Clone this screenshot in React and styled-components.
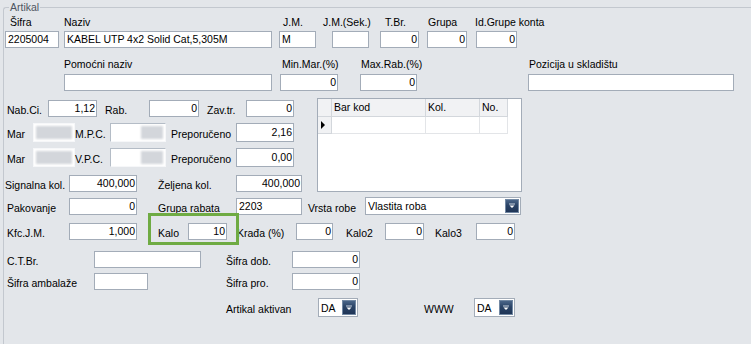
import styled, { createGlobalStyle } from "styled-components";

const Global = createGlobalStyle`
  html, body {
    margin: 0;
    padding: 0;
    background: #e3e6ea;
    overflow: hidden;
  }
  body {
    font-family: "Liberation Sans", Arial, sans-serif;
    font-size: 10.5px;
    color: #000;
  }
`;

// the group box continues past the window edge, so only top/left borders show
const GroupBox = styled.fieldset`
  margin: 1px 0 0 3px;
  padding: 0;
  width: 748px;
  height: 343px;
  border: 1px solid #c3c8cf;
  border-right: none;
  border-bottom: none;
  border-radius: 3px 0 0 0;
  min-width: 0;
  box-sizing: border-box;
`;

const Legend = styled.legend`
  margin-left: 5px;
  padding: 0 1px;
  line-height: 13px;
  color: #4e5560;
`;

const Row = styled.div`
  display: flex;
  align-items: center;
  height: ${(p) => (p.$h ? `${p.$h}px` : "auto")};
  margin-top: ${(p) => p.$mt || 0}px;
  position: relative;
`;

const Label = styled.span`
  flex: none;
  width: ${(p) => (p.$w ? `${p.$w}px` : "auto")};
  margin-left: ${(p) => p.$ml || 0}px;
  line-height: 13px;
  white-space: nowrap;
  align-self: ${(p) => (p.$head ? "auto" : "flex-end")};
  margin-bottom: ${(p) => p.$mb || 0}px;
`;

const Field = styled.div`
  flex: none;
  box-sizing: border-box;
  width: ${(p) => p.$w}px;
  height: ${(p) => p.$h || 17}px;
  margin-left: ${(p) => p.$ml || 0}px;
  background: #fff;
  border: 1px solid #a3acb8;
  padding: 0 ${(p) => (p.$left ? 2 : 1)}px;
  text-align: ${(p) => (p.$left ? "left" : "right")};
  line-height: ${(p) => (p.$h || 17) - 2}px;
  white-space: nowrap;
  overflow: hidden;
`;

const Hidden = styled.div`
  flex: none;
  box-sizing: border-box;
  width: ${(p) => p.$w}px;
  height: 19px;
  border: 1px solid ${(p) => (p.$solid ? "#f6f7f9" : "#b4bcc6")};
  border-right-color: #f6f7f9;
  border-bottom-color: #f6f7f9;
  background: #fff;
  display: flex;
  justify-content: flex-end;
  padding: 2px;
  overflow: hidden;
`;

const Smudge = styled.div`
  width: ${(p) => (p.$full ? "100%" : "22px")};
  height: 100%;
  background: #d3d6db;
  filter: blur(0.8px);
`;

const Select = styled.div`
  flex: none;
  box-sizing: border-box;
  display: flex;
  align-items: center;
  width: ${(p) => p.$w}px;
  height: ${(p) => p.$h || 18}px;
  margin-left: ${(p) => p.$ml || 0}px;
  background: #fff;
  border: 1px solid #a3acb8;
  padding: 1px 1px 1px 2px;
`;

const SelectText = styled.span`
  flex: 1;
  white-space: nowrap;
  overflow: hidden;
`;

const DropBtn = styled.span`
  flex: none;
  box-sizing: border-box;
  width: 14px;
  height: 100%;
  border: 1px solid #7288a3;
  background: linear-gradient(#4a6588, #2a4366 45%, #1f3557);
  display: flex;
  align-items: center;
  justify-content: center;
`;

const Mid = styled.div`
  display: flex;
  align-items: flex-start;
  margin-top: 7px;
`;

const LeftCol = styled.div`
  width: 298px;
  padding-top: 1px;
  flex: none;
`;

const Grid = styled.div`
  flex: none;
  box-sizing: border-box;
  margin-left: 15px;
  width: 205px;
  height: 94px;
  background: #fff;
  border: 1px solid #a3acb8;
`;

const GridRow = styled.div`
  display: flex;
  height: ${(p) => p.$h}px;
`;

const Cell = styled.div`
  flex: none;
  box-sizing: border-box;
  width: ${(p) => p.$w}px;
  background: ${(p) => (p.$head ? "#f1f2f4" : "#fff")};
  border-right: 1px solid ${(p) => (p.$head ? "#d3d7dc" : "#e3e5e8")};
  border-bottom: 1px solid ${(p) => (p.$head ? "#d3d7dc" : "#e3e5e8")};
  padding-left: 2px;
  line-height: 17px;
  display: flex;
  align-items: center;
`;

const Highlight = styled.div`
  position: absolute;
  left: 144px;
  top: -9px;
  width: 91px;
  height: 32px;
  box-sizing: border-box;
  border: 3px solid #6fab43;
  pointer-events: none;
`;

const Arrow = () => (
  <svg width="8" height="8" viewBox="0 0 8 8">
    <rect x="1" y="1.5" width="6" height="1" fill="#c9d3df" />
    <path d="M1.5 3.5 L6.5 3.5 L4 6 Z" fill="#fff" />
  </svg>
);

const Combo = ({ w, ml, h, children }) => (
  <Select $w={w} $ml={ml} $h={h}>
    <SelectText>{children}</SelectText>
    <DropBtn>
      <Arrow />
    </DropBtn>
  </Select>
);

const Pointer = () => (
  <svg width="6" height="8" viewBox="0 0 6 8">
    <path d="M1 0 L5 4 L1 8 Z" fill="#000" />
  </svg>
);

export default function App() {
  return (
    <>
      <Global />
      <GroupBox>
        <Legend>Artikal</Legend>

        <Row $mt={2} $h={13}>
          <Label $head $ml={6} $w={54}>Šifra</Label>
          <Label $head $w={219}>Naziv</Label>
          <Label $head $w={40}>J.M.</Label>
          <Label $head $w={62}>J.M.(Sek.)</Label>
          <Label $head $w={43}>T.Br.</Label>
          <Label $head $w={47}>Grupa</Label>
          <Label $head>Id.Grupe konta</Label>
        </Row>
        <Row $mt={2}>
          <Field $left $ml={1} $w={54}>2205004</Field>
          <Field $left $ml={5} $w={208}>KABEL UTP 4x2 Solid Cat,5,305M</Field>
          <Field $left $ml={7} $w={37}>M</Field>
          <Field $ml={16} $w={37} />
          <Field $ml={11} $w={39}>0</Field>
          <Field $ml={8} $w={40}>0</Field>
          <Field $ml={9} $w={41}>0</Field>
        </Row>

        <Row $mt={10} $h={13}>
          <Label $head $ml={60} $w={218}>Pomoćni naziv</Label>
          <Label $head $w={79}>Min.Mar.(%)</Label>
          <Label $head $w={168}>Max.Rab.(%)</Label>
          <Label $head>Pozicija u skladištu</Label>
        </Row>
        <Row $mt={3}>
          <Field $ml={60} $w={208} />
          <Field $ml={8} $w={58}>0</Field>
          <Field $ml={22} $w={57}>0</Field>
          <Field $ml={111} $w={206} />
        </Row>

        <Mid>
          <LeftCol>
            <Row $h={18}>
              <Label $ml={3} $w={41}>Nab.Ci.</Label>
              <Field $w={49}>1,12</Field>
              <Label $ml={8} $w={44}>Rab.</Label>
              <Field $w={50}>0</Field>
              <Label $ml={8} $w={39}>Zav.tr.</Label>
              <Field $w={48}>0</Field>
            </Row>
            <Row $h={19} $mt={6}>
              <Label $ml={3} $w={26} $mb={1}>Mar</Label>
              <Hidden $solid $w={42}>
                <Smudge $full />
              </Hidden>
              <Label $w={35} $mb={1}>M.P.C.</Label>
              <Hidden $w={56}>
                <Smudge />
              </Hidden>
              <Label $ml={5} $w={65} $mb={1}>Preporučeno</Label>
              <Field $w={58} $h={19}>2,16</Field>
            </Row>
            <Row $h={19} $mt={6}>
              <Label $ml={3} $w={26} $mb={1}>Mar</Label>
              <Hidden $solid $w={42}>
                <Smudge $full />
              </Hidden>
              <Label $w={35} $mb={1}>V.P.C.</Label>
              <Hidden $w={56}>
                <Smudge />
              </Hidden>
              <Label $ml={5} $w={65} $mb={1}>Preporučeno</Label>
              <Field $w={58} $h={19}>0,00</Field>
            </Row>
            <Row $h={18} $mt={7}>
              <Label $ml={1} $w={64}>Signalna kol.</Label>
              <Field $w={68}>400,000</Field>
              <Label $ml={21} $w={78}>Željena kol.</Label>
              <Field $w={66}>400,000</Field>
            </Row>
          </LeftCol>
          <Grid>
            <GridRow $h={18}>
              <Cell $head $w={14} />
              <Cell $head $w={94}>Bar kod</Cell>
              <Cell $head $w={54}>Kol.</Cell>
              <Cell $head $w={28}>No.</Cell>
            </GridRow>
            <GridRow $h={17}>
              <Cell $head $w={14}>
                <Pointer />
              </Cell>
              <Cell $w={94} />
              <Cell $w={54} />
              <Cell $w={28} />
            </GridRow>
          </Grid>
        </Mid>

        <Row $h={18} $mt={5}>
          <Label $ml={3} $w={62}>Pakovanje</Label>
          <Field $w={68}>0</Field>
          <Label $ml={21} $w={78}>Grupa rabata</Label>
          <Field $left $w={66}>2203</Field>
          <Label $ml={6} $w={57}>Vrsta robe</Label>
          <Combo w={156}>Vlastita roba</Combo>
        </Row>

        <Row $h={18} $mt={7}>
          <Label $ml={3} $w={62}>Kfc.J.M.</Label>
          <Field $w={68}>1,000</Field>
          <Label $ml={21} $w={30}>Kalo</Label>
          <Field $w={39}>10</Field>
          <Label $ml={10} $w={59}>Krađa (%)</Label>
          <Field $w={37}>0</Field>
          <Label $ml={13} $w={39}>Kalo2</Label>
          <Field $w={39}>0</Field>
          <Label $ml={11} $w={41}>Kalo3</Label>
          <Field $w={39}>0</Field>
          <Highlight />
        </Row>

        <Row $h={18} $mt={10}>
          <Label $ml={3} $w={87}>C.T.Br.</Label>
          <Field $w={107} />
          <Label $ml={25} $w={66}>Šifra dob.</Label>
          <Field $w={68}>0</Field>
        </Row>

        <Row $h={18} $mt={4}>
          <Label $ml={3} $w={87}>Šifra ambalaže</Label>
          <Field $w={54} />
          <Label $ml={78} $w={66}>Šifra pro.</Label>
          <Field $w={68}>0</Field>
        </Row>

        <Row $h={19} $mt={8}>
          <Label $ml={222} $w={92} $mb={1}>Artikal aktivan</Label>
          <Combo w={40} h={19}>DA</Combo>
          <Label $ml={66} $w={50} $mb={1}>WWW</Label>
          <Combo w={41} h={19}>DA</Combo>
        </Row>
      </GroupBox>
    </>
  );
}
